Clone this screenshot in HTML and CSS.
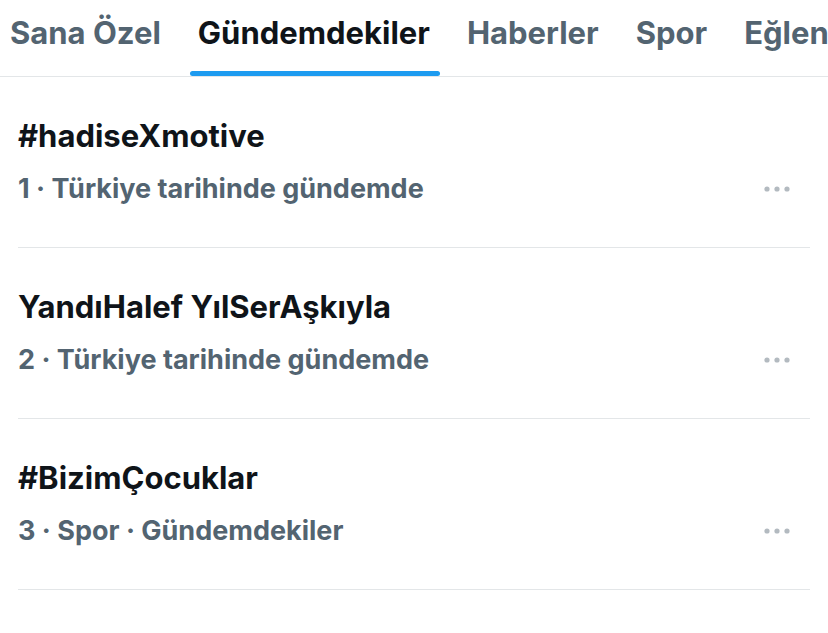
FILE: index.html
```html
<!DOCTYPE html>
<html lang="tr">
<head>
<meta charset="utf-8">
<link rel="stylesheet" href="styles.css">
</head>
<body>
<nav class="tabs">
  <div class="tab">Sana Özel</div>
  <div class="tab active">Gündemdekiler</div>
  <div class="tab">Haberler</div>
  <div class="tab">Spor</div>
  <div class="tab">Eğlence</div>
</nav>
<main class="list">
  <div class="trend">
    <div class="title">#hadiseXmotive</div>
    <div class="meta"><span>1 · Türkiye tarihinde gündemde</span><svg class="more" viewBox="0 0 26 6" width="26" height="6"><circle cx="3" cy="3" r="2.6"/><circle cx="13" cy="3" r="2.6"/><circle cx="23" cy="3" r="2.6"/></svg></div>
  </div>
  <div class="trend">
    <div class="title">YandıHalef YılSerAşkıyla</div>
    <div class="meta"><span>2 · Türkiye tarihinde gündemde</span><svg class="more" viewBox="0 0 26 6" width="26" height="6"><circle cx="3" cy="3" r="2.6"/><circle cx="13" cy="3" r="2.6"/><circle cx="23" cy="3" r="2.6"/></svg></div>
  </div>
  <div class="trend">
    <div class="title">#BizimÇocuklar</div>
    <div class="meta"><span>3 · Spor · Gündemdekiler</span><svg class="more" viewBox="0 0 26 6" width="26" height="6"><circle cx="3" cy="3" r="2.6"/><circle cx="13" cy="3" r="2.6"/><circle cx="23" cy="3" r="2.6"/></svg></div>
  </div>
</main>
</body>
</html>
```
FILE: styles.css
```css
html, body {
  margin: 0;
  padding: 0;
  background: #ffffff;
  font-family: Inter, "Noto Sans", sans-serif;
  font-weight: 700;
  overflow: hidden;
}

.tabs {
  display: flex;
  gap: 37px;
  height: 76px;
  padding-left: 10px;
  border-bottom: 1.5px solid #e3e6e8;
  white-space: nowrap;
  overflow: hidden;
}

.tab {
  position: relative;
  height: 64px;
  display: flex;
  align-items: center;
  font-size: 31px;
  color: #536471;
  flex-shrink: 0;
}

.tab.active {
  color: #0f1419;
}

.tab.active::after {
  content: "";
  position: absolute;
  left: -8px;
  right: -10px;
  top: 71px;
  height: 5px;
  border-radius: 3px;
  background: #1d9bf0;
}

.list {
  padding: 0 18px;
}

.trend {
  padding: 41px 0 42px;
  border-bottom: 1.5px solid #e3e6e8;
}

.title {
  font-size: 31px;
  line-height: 36px;
  color: #0f1419;
  margin-bottom: 19px;
}

.meta {
  display: flex;
  justify-content: space-between;
  align-items: center;
  font-size: 27px;
  line-height: 32px;
  color: #536471;
  padding-right: 20px;
}

.more {
  fill: #b3bac0;
}
```
